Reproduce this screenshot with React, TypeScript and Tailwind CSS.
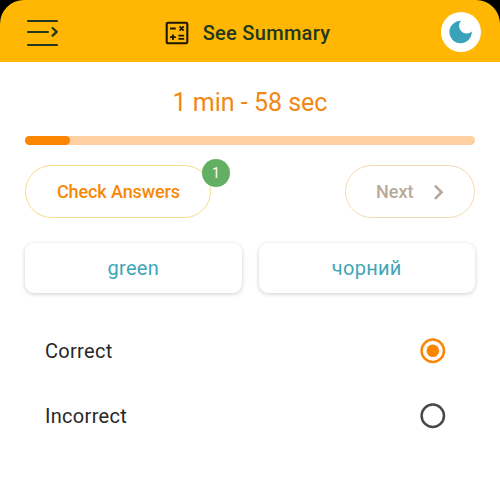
import React from "react";

function MenuIcon() {
  return (
    <svg width="34" height="30" viewBox="0 0 34 30" fill="none" stroke="#20391f" strokeWidth="2.1" strokeLinecap="round" strokeLinejoin="round">
      <path d="M3 4H32M3 15H23M3 28H32" />
      <path d="M27.600 11L31.700 14.800L27.600 18.600" strokeWidth="2.3" />
    </svg>
  );
}

function CalculatorIcon() {
  return (
    <svg width="24" height="24" viewBox="0 0 24 24" fill="none" stroke="#1a1703">
      <rect x="1.700" y="1.700" width="20.6" height="20.6" rx="1.4" strokeWidth="2.1" />
      <path d="M5 7.500H10.700M14.500 5.400L18.700 9.600M18.700 5.400L14.500 9.600M5 16.200H10.800M7.900 13.400V19M13.400 14.700H19.200M13.400 17.800H19.200" strokeWidth="1.8" />
    </svg>
  );
}

function MoonIcon() {
  return (
    <svg width="24" height="24" viewBox="0 0 24 24">
      <path d="M12 0.800A7.650 7.650 0 0 0 22.800 11.600A11.200 11.200 0 1 1 12 0.800Z" fill="#3aa3ba" />
    </svg>
  );
}

function Header() {
  return (
    <div className="bg-black">
      <header className="grid h-[62px] grid-cols-[1fr_auto_1fr] items-center rounded-t-[24px] bg-[#ffb703] pr-[19px] pl-[25px] pt-[2px]">
        <button className="justify-self-start"><MenuIcon /></button>
        <div className="flex items-center gap-[14px] pt-[2px] pr-[11px]">
          <CalculatorIcon />
          <span className="text-[20px] leading-6 font-medium tracking-[0.3px] text-[#20391f]">See Summary</span>
        </div>
        <button className="flex size-10 items-center justify-center justify-self-end rounded-full bg-white"><MoonIcon /></button>
      </header>
    </div>
  );
}

function Radio({ label, checked }: { label: string; checked?: boolean }) {
  return (
    <label className="flex h-[65px] items-center justify-between">
      <span className="text-[20px] leading-6 tracking-[0.3px] text-[#272727]">{label}</span>
      <svg width="26" height="26" viewBox="0 0 26 26" fill="none">
        <circle cx="12.800" cy="12.800" r="11.2" stroke={checked ? "#f98608" : "#48474d"} strokeWidth="2.5" />
        {checked && <circle cx="12.800" cy="12.800" r="6.3" fill="#fb8500" />}
      </svg>
    </label>
  );
}

export default function App() {
  return (
    <div className="h-[497px] w-[500px] overflow-hidden bg-white font-[Roboto,sans-serif]">
      <Header />
      <main className="px-[25px] pt-[25px]">
        <p className="text-center text-[25px] leading-8 text-[#f38714]">1 min - 58 sec</p>
        <div className="mt-[17px] h-[9px] rounded-full bg-[#ffd0a2]">
          <div className="h-full w-[45px] rounded-full bg-[#fb8500]" />
        </div>
        <div className="mt-[20px] flex justify-between">
          <button className="relative h-[53px] w-[186px] rounded-full border border-[#f5dc8c] text-[18px] font-medium tracking-[-0.1px] text-[#f98706]">
            <span className="pl-px">Check Answers</span>
            <span className="absolute -top-[7px] -right-[20px] flex size-7 items-center justify-center rounded-full bg-[#63b065] text-[14px] font-normal text-white">1</span>
          </button>
          <button className="flex h-[53px] w-[130px] items-center rounded-full border border-[#f3d9b3] pl-[30px] text-[18px] font-medium text-[#b8aa9b]">
            Next
            <svg className="ml-[20px]" width="12" height="18" viewBox="0 0 12 18" fill="none" stroke="#b5a798" strokeWidth="2.6">
              <path d="M2 2.600L8.500 9.200L2 15.800" />
            </svg>
          </button>
        </div>
        <div className="mt-[25px] grid grid-cols-2 gap-[17px] text-[20px] tracking-[0.3px] text-[#3fa5b8]">
          <div className="flex h-[50px] items-center justify-center rounded-[9px] bg-white shadow-[0_1px_4px_rgba(0,0,0,0.2)]">green</div>
          <div className="flex h-[50px] items-center justify-center rounded-[9px] bg-white shadow-[0_1px_4px_rgba(0,0,0,0.2)]">чорний</div>
        </div>
        <div className="mt-[25px] pr-[29px] pl-[20px]">
          <Radio label="Correct" checked />
          <Radio label="Incorrect" />
        </div>
      </main>
    </div>
  );
}
